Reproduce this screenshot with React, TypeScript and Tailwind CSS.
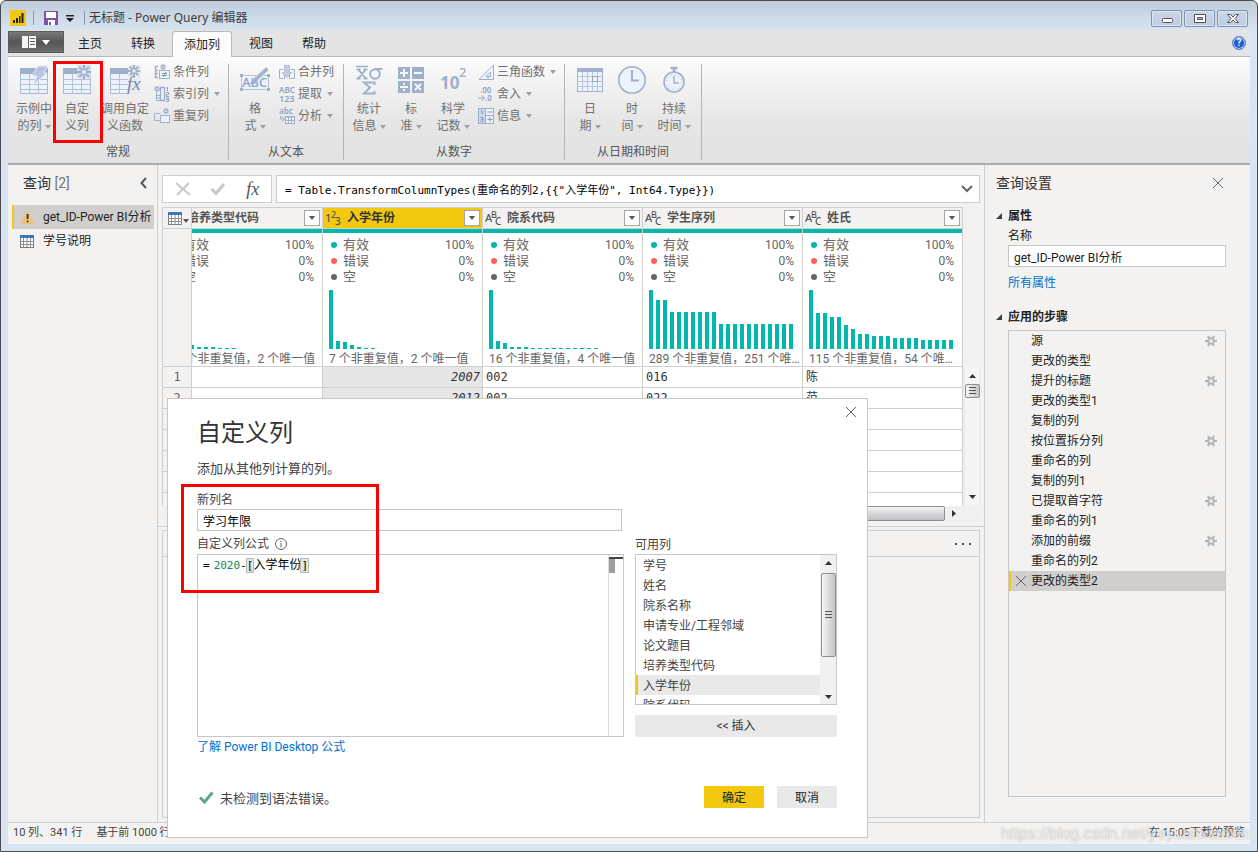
import type { ReactNode } from 'react';

type IconProps = { className?: string };

interface Column {
  name: string;
  type: 'number' | 'text';
  selected?: boolean;
  bars: number[];
  summary: string;
}

const TABS = ['主页', '转换', '添加列', '视图', '帮助'];

// 柱高以像素计，最高 59
const COLUMNS: Column[] = [
  { name: '培养类型代码', type: 'text', bars: [59, 30, 10, 4, 2, 2, 2, 1, 1, 1], summary: '10 个非重复值，2 个唯一值' },
  { name: '入学年份', type: 'number', selected: true, bars: [59, 8, 7, 4, 2, 1, 1], summary: '7 个非重复值，2 个唯一值' },
  {
    name: '院系代码',
    type: 'text',
    bars: [59, 8, 6, 2, 2, 2, 1, 1, 1, 1, 1, 1, 1, 1, 1, 1],
    summary: '16 个非重复值，4 个唯一值',
  },
  {
    name: '学生序列',
    type: 'text',
    bars: [59, 49, 49, 37, 37, 37, 37, 37, 37, 37, 25, 25, 25, 25, 25, 25, 25, 25, 25, 25, 25],
    summary: '289 个非重复值，251 个唯一值',
  },
  {
    name: '姓氏',
    type: 'text',
    bars: [59, 36, 36, 32, 32, 24, 20, 15, 15, 13, 13, 13, 11, 11, 11, 11, 9, 9, 9, 9, 9],
    summary: '115 个非重复值，54 个唯一值',
  },
];

const ROWS: string[][] = [
  ['', '2007', '002', '016', '陈'],
  ['', '2012', '002', '022', '范'],
  ['', '', '', '', ''],
  ['', '', '', '', ''],
  ['', '', '', '', ''],
  ['', '', '', '', ''],
  ['', '', '', '', ''],
];

const QUALITY = [
  { label: '有效', value: '100%', dot: 'bg-[#01b8aa]' },
  { label: '错误', value: '0%', dot: 'bg-[#fd625e]' },
  { label: '空', value: '0%', dot: 'bg-[#666666]' },
];

const STEPS: { name: string; gear?: boolean }[] = [
  { name: '源', gear: true },
  { name: '更改的类型' },
  { name: '提升的标题', gear: true },
  { name: '更改的类型1' },
  { name: '复制的列' },
  { name: '按位置拆分列', gear: true },
  { name: '重命名的列' },
  { name: '复制的列1' },
  { name: '已提取首字符', gear: true },
  { name: '重命名的列1' },
  { name: '添加的前缀', gear: true },
  { name: '重命名的列2' },
  { name: '更改的类型2' },
];

const AVAILABLE = ['学号', '姓名', '院系名称', '申请专业/工程邻域', '论文题目', '培养类型代码', '入学年份', '院系代码'];

/* ---------- 图标 ---------- */

function TableShape({ x = 0, y = 0 }: { x?: number; y?: number }) {
  return (
    <g transform={`translate(${x} ${y})`}>
      <rect x="0.5" y="0.5" width="27" height="25" fill="#edf3fc" stroke="#aab8cf" />
      <rect width="28" height="6" fill="#9fb0cc" />
      <path d="M9.5 6v20M18.5 6v20M0 11.5h28M0 16.5h28M0 21.5h28" stroke="#b4c2d9" fill="none" />
    </g>
  );
}

function Spark({ x, y, r = 6 }: { x: number; y: number; r?: number }) {
  const d = r * 0.7;
  return (
    <g transform={`translate(${x} ${y})`} stroke="#9fb0cc" strokeWidth={r > 5 ? 2 : 1.2}>
      <path d={`M0 ${-r}V${r}M${-r} 0H${r}M${-d} ${-d}L${d} ${d}M${-d} ${d}L${d} ${-d}`} />
      <circle r={r / 3.5} fill="#e8eef8" stroke="none" />
    </g>
  );
}

const ExampleIcon = () => (
  <svg width="30" height="30" viewBox="0 0 30 30">
    <TableShape x={1} y={3} />
    <path d="M19 1h10l-5 7h4L14 20l4-9h-5z" fill="#b6c5dd" stroke="#e8eef8" />
  </svg>
);

const CustomIcon = () => (
  <svg width="30" height="30" viewBox="0 0 30 30">
    <TableShape x={1} y={3} />
    <path d="M15 0h14v13H15z" fill="#d3dcea" />
    <Spark x={22} y={7} r={7} />
  </svg>
);

const InvokeIcon = () => (
  <svg width="32" height="30" viewBox="0 0 32 30" className="overflow-visible">
    <TableShape x={1} y={3} />
    <path d="M19 0h13v30H19z" fill="#eaebed" />
    <Spark x={25} y={6} />
    <text x="18" y="25" fontSize="19" fontStyle="italic" fontFamily="Liberation Serif, serif" fill="#7389ae">
      fx
    </text>
  </svg>
);

const ConditionIcon = () => (
  <svg width="16" height="16" viewBox="0 0 16 16" fill="none" stroke="#9fb0cc">
    <path d="M4 2.500H1.500V13.500H4M1.500 6.500H4M1.500 9.500H4" strokeWidth="1.500" />
    <rect x="5.500" y="6.500" width="10" height="8" fill="#edf3fc" />
    <path d="M8 9.500h5M8 11.500h5M12 8l-3 5" stroke="#7f93b5" />
    <Spark x={9} y={3} r={3} />
  </svg>
);

const IndexIcon = () => (
  <svg width="16" height="16" viewBox="0 0 16 16" fill="none" stroke="#9fb0cc">
    <path d="M2.500 6v8.500h4M2 9.500h4M2 12h4" />
    <rect x="6.500" y="1.500" width="4" height="13" fill="#edf3fc" strokeWidth="1.500" />
    <Spark x={3} y={3} r={3} />
    <path d="M13.500 1v4M12.500 2h1M12 6.500h2.500v2h-2v2H15M12 12h2.500v3.500H12M12.500 13.500H14" stroke="#8fa2c1" />
  </svg>
);

const DuplicateIcon = () => (
  <svg width="16" height="16" viewBox="0 0 16 16" fill="none" stroke="#9fb0cc">
    <path d="M6 5.500H0.500v7H6" />
    <rect x="6.500" y="7.500" width="9" height="7" fill="#edf3fc" />
    <Spark x={12} y={3} r={3} />
  </svg>
);

const FormatIcon = () => (
  <svg width="32" height="30" viewBox="0 0 32 30">
    <rect x="2.500" y="10.500" width="27" height="14" fill="#edf3fc" stroke="#b7c4da" />
    <text x="3" y="22" fontSize="13" fontFamily="Noto Sans, sans-serif" fontWeight="500" fill="#8fa2c1">
      ABC
    </text>
    <path d="M27 2l3 3-13 12-3-3z" fill="#a3b3cd" stroke="#e6e8ec" />
    <path d="M16 14c-3 0-3 4-6 5 4 1 8-1 8-3z" fill="#9fb0cc" />
    <path d="M1 9h3v3H1zM28 9h3v3h-3zM1 23h3v3H1zM28 23h3v3h-3z" fill="#9fb0cc" />
  </svg>
);

const MergeIcon = () => (
  <svg width="16" height="16" viewBox="0 0 16 16" fill="none" stroke="#9fb0cc">
    <path d="M4 5.500H0.500v9H4M12 5.500h3.500v9H12" />
    <path d="M5.500 1.500h5v7h2.500L8 13.500 3 8.500h2.500z" fill="#c0cce0" stroke="#b3c1d8" />
    <path d="M5.500 11v4M10.500 11v4" />
  </svg>
);

const ExtractIcon = () => (
  <svg width="17" height="16" viewBox="0 0 17 16" className="overflow-visible" fontFamily="Noto Sans, sans-serif" fontWeight="600" fill="#8fa2c1">
    <text x="0" y="7" fontSize="8">ABC</text>
    <text x="0" y="16" fontSize="9">123</text>
  </svg>
);

const ParseIcon = () => (
  <svg width="16" height="16" viewBox="0 0 16 16" className="overflow-visible" fill="none" stroke="#9fb0cc">
    <text x="0" y="6" fontSize="8" stroke="none" fontFamily="Noto Sans, sans-serif" fontWeight="600" fill="#8fa2c1">
      abc
    </text>
    <path d="M1.500 8v3H5M3 8.500L5.500 11 3 13.500" />
    <rect x="6.500" y="8.500" width="9" height="7" fill="#edf3fc" />
    <path d="M6 9h10M9.500 8v8M12.500 8v8M6 12.500h10" />
  </svg>
);

const StatsIcon = () => (
  <svg width="30" height="30" viewBox="0 0 30 30" fill="none" stroke="#9fb0cc" strokeWidth="2">
    <path d="M2 1.500h12" strokeWidth="1.500" />
    <path d="M4 4l8 10M12 4L4 14M2.500 4.500h4M9.500 4.500h4M2.500 13.500h4M9.500 13.500h4" />
    <path d="M28.500 4h-8" />
    <circle cx="21" cy="9" r="4.800" />
    <path d="M20.500 20v-2.500H10l6 5-6 6h10.500V26" />
  </svg>
);

const StandardIcon = () => (
  <svg width="28" height="28" viewBox="0 0 28 28" fill="none">
    <path d="M1 1h12v12H1zM15 1h12v12H15zM1 15h12v12H1zM15 15h12v12H15z" fill="#9fb0cc" />
    <path d="M7 3v8M3 7h8M17 7h8M3 21h8M18 18l6 6M24 18l-6 6" stroke="#f4f7fc" strokeWidth="2" />
    <path d="M6 17h2v2H6zM6 23h2v2H6z" fill="#f4f7fc" />
  </svg>
);

const ScienceIcon = () => (
  <svg width="30" height="30" viewBox="0 0 30 30" className="overflow-visible" fontFamily="Noto Sans, sans-serif" fontWeight="700" fill="#9fb0cc">
    <text x="2" y="24" fontSize="17">10</text>
    <text x="21" y="12" fontSize="13" fontWeight="500">2</text>
  </svg>
);

const TrigIcon = () => (
  <svg width="17" height="16" viewBox="0 0 17 16" fill="none" stroke="#9fb0cc">
    <path d="M1 15.500L15.500 1v14.500z" fill="#edf3fc" />
    <path d="M8 12.500L12.500 8v4.500zM10 12.500V16" />
  </svg>
);

const RoundIcon = () => (
  <svg width="16" height="16" viewBox="0 0 16 16" className="overflow-visible" fontFamily="Noto Sans, sans-serif" fontWeight="600" fill="#8fa2c1">
    <text x="2" y="7" fontSize="8">.00</text>
    <text x="7" y="15" fontSize="8">.0</text>
    <path d="M0 12h6M4 9.500L6.500 12 4 14.500" stroke="#8fa2c1" fill="none" />
  </svg>
);

const InfoGridIcon = () => (
  <svg width="16" height="16" viewBox="0 0 16 16" fill="none" stroke="#9fb0cc">
    <rect x="0.500" y="0.500" width="15" height="15" fill="#edf3fc" />
    <path d="M1 1h6v14H1z" fill="#cdd7e7" stroke="none" />
    <path d="M7.500 0v16M8 7.500h8" />
    <path d="M9.500 4h5M12 9v5M9.500 11.500h5M3 2.500h1V6M2.500 9.500H5v4H2.500M3 11.500h2" stroke="#8399bf" />
  </svg>
);

const DateIcon = () => (
  <svg width="28" height="28" viewBox="0 0 28 28" fill="none">
    <rect x="1.500" y="2.500" width="25" height="23" fill="#edf3fc" stroke="#9fb0cc" />
    <path d="M1 2h26v4H1z" fill="#9fb0cc" />
    <path d="M6.500 6v20M11.500 6v20M16.500 6v20M21.500 6v20M1 10.500h26M1 15.500h26M1 20.500h26" stroke="#b7c4da" />
    <path d="M16.500 10.500h5v5h-5z" stroke="#8fa2c1" />
  </svg>
);

const TimeIcon = () => (
  <svg width="30" height="30" viewBox="0 0 30 30" fill="none" stroke="#9fb0cc">
    <circle cx="15" cy="15" r="13.200" fill="#edf3fc" strokeWidth="1.600" />
    <path d="M15 5v10.500h7" strokeWidth="2" />
  </svg>
);

const DurationIcon = () => (
  <svg width="28" height="30" viewBox="0 0 28 30" fill="none" stroke="#9fb0cc">
    <circle cx="14" cy="17" r="10" fill="#edf3fc" strokeWidth="1.600" />
    <circle cx="14" cy="17" r="7.500" strokeDasharray="1 3" />
    <path d="M10.500 3h7M14 3v4" strokeWidth="2.500" />
    <path d="M14 11v7h5" strokeWidth="1.500" />
  </svg>
);

const GridIcon = () => (
  <svg width="14" height="13" viewBox="0 0 14 13" fill="none" className="shrink-0">
    <rect x="0.500" y="0.500" width="13" height="12" fill="#fff" stroke="#7a7a7a" />
    <path d="M0 0h14v3H0z" fill="#3e78b9" />
    <path d="M3.500 3v10M7 3v10M10.500 3v10M0 6.500h14M0 9.500h14" stroke="#8f8f8f" />
  </svg>
);

const GearIcon = () => (
  <svg width="12" height="12" viewBox="0 0 12 12" fill="none" stroke="#b5b5b5">
    <circle cx="6" cy="6" r="2.800" strokeWidth="2" />
    <path d="M0 6h3M9 6h3M3 1l1.500 3M9 1L7.500 4M3 11l1.500-3M9 11L7.500 8" strokeWidth="2" />
  </svg>
);

const CloseIcon = ({ className }: IconProps) => (
  <svg width="12" height="12" viewBox="0 0 12 12" className={className} fill="none" stroke="currentColor">
    <path d="M1 1l10 10M11 1L1 11" />
  </svg>
);

const Caret = ({ className = '' }: IconProps) => (
  <svg width="6" height="4" viewBox="0 0 6 4" className={`shrink-0 ${className}`}>
    <path d="M0 0h6L3 4z" fill="currentColor" />
  </svg>
);

const Expander = () => (
  <svg width="6" height="6" viewBox="0 0 6 6">
    <path d="M6 0v6H0z" fill="#3f3f3f" />
  </svg>
);

function TypeIcon({ type }: { type: Column['type'] }) {
  const [a, b, c] = type === 'number' ? ['1', '2', '3'] : ['A', 'B', 'C'];
  return (
    <svg width="18" height="18" viewBox="0 0 18 18" className="shrink-0 overflow-visible" fill="#555" fontFamily="Noto Sans, sans-serif" fontWeight="500">
      <text x="0" y="13" fontSize="11">{a}</text>
      <text x="6" y="9" fontSize="9">{b}</text>
      <text x="10" y="16" fontSize="10">{c}</text>
    </svg>
  );
}

/* ---------- 功能区 ---------- */

function BigButton({ icon, lines, menu, width }: { icon: ReactNode; lines: [string, string]; menu?: boolean; width: string }) {
  return (
    <button type="button" className={`flex shrink-0 flex-col items-center whitespace-nowrap leading-[17px] text-[#707070] ${width}`}>
      <span className="flex h-8 items-center">{icon}</span>
      <span className="mt-[5px]">{lines[0]}</span>
      <span className="flex items-center gap-[3px]">
        {lines[1]}
        {menu && <Caret className="text-[#a0a0a0]" />}
      </span>
    </button>
  );
}

function SmallButton({ icon, label, menu }: { icon: ReactNode; label: string; menu?: boolean }) {
  return (
    <button type="button" className="flex h-4 items-center whitespace-nowrap text-[#707070]">
      <span className="mr-0.5 flex w-[17px]">{icon}</span>
      {label}
      {menu && <Caret className="ml-[5px] text-[#a0a0a0]" />}
    </button>
  );
}

function RibbonGroup({ title, width, children }: { title: string; width: string; children: ReactNode }) {
  return (
    <div className={`flex shrink-0 flex-col justify-between border-r border-[#b4b4b4] ${width}`}>
      <div className="flex pl-1">{children}</div>
      <div className="text-center leading-4 text-[#555]">{title}</div>
    </div>
  );
}

function Ribbon() {
  return (
    <div className="relative flex h-[108px] shrink-0 border-b-2 border-[#ababab] bg-linear-to-b from-[#fbfbfb] via-[#e6e6e6] via-60% to-[#e2e2e2] pb-[3px] pt-[7px]">
      <RibbonGroup title="常规" width="w-[221px]">
        <BigButton icon={<ExampleIcon />} lines={['示例中', '的列']} menu width="w-[44px]" />
        <BigButton icon={<CustomIcon />} lines={['自定', '义列']} width="w-[42px]" />
        <BigButton icon={<InvokeIcon />} lines={['调用自定', '义函数']} width="w-[54px]" />
        <div className="flex flex-col gap-1.5 pl-0.5">
          <SmallButton icon={<ConditionIcon />} label="条件列" />
          <SmallButton icon={<IndexIcon />} label="索引列" menu />
          <SmallButton icon={<DuplicateIcon />} label="重复列" />
        </div>
      </RibbonGroup>
      <RibbonGroup title="从文本" width="w-[115px]">
        <BigButton icon={<FormatIcon />} lines={['格', '式']} menu width="w-[44px]" />
        <div className="flex flex-col gap-1.5 pl-0.5">
          <SmallButton icon={<MergeIcon />} label="合并列" />
          <SmallButton icon={<ExtractIcon />} label="提取" menu />
          <SmallButton icon={<ParseIcon />} label="分析" menu />
        </div>
      </RibbonGroup>
      <RibbonGroup title="从数字" width="w-[221px]">
        <BigButton icon={<StatsIcon />} lines={['统计', '信息']} menu width="w-[42px]" />
        <BigButton icon={<StandardIcon />} lines={['标', '准']} menu width="w-[42px]" />
        <BigButton icon={<ScienceIcon />} lines={['科学', '记数']} menu width="w-[42px]" />
        <div className="flex flex-col gap-1.5 pl-1">
          <SmallButton icon={<TrigIcon />} label="三角函数" menu />
          <SmallButton icon={<RoundIcon />} label="舍入" menu />
          <SmallButton icon={<InfoGridIcon />} label="信息" menu />
        </div>
      </RibbonGroup>
      <RibbonGroup title="从日期和时间" width="w-[137px]">
        <BigButton icon={<DateIcon />} lines={['日', '期']} menu width="w-[42px]" />
        <BigButton icon={<TimeIcon />} lines={['时', '间']} menu width="w-[42px]" />
        <BigButton icon={<DurationIcon />} lines={['持续', '时间']} menu width="w-[42px]" />
      </RibbonGroup>
      {/* 标注框 */}
      <div className="pointer-events-none absolute left-[45px] top-1 h-[82px] w-[50px] border-3 border-[#ff0000]" />
    </div>
  );
}

/* ---------- 标题栏与选项卡 ---------- */

function WindowButton({ label, children }: { label: string; children: ReactNode }) {
  return (
    <button
      type="button"
      aria-label={label}
      className="flex h-[17px] w-[31px] items-center justify-center rounded-[2px] border border-[#7f8fae] bg-linear-to-b from-[#c9d7e8] to-[#bccbdd] shadow-[inset_0_0_0_1px_#dbe6f2]"
    >
      <svg width="12" height="11" viewBox="0 0 12 11" fill="#fff" stroke="#50505f">
        {children}
      </svg>
    </button>
  );
}

function TitleBar() {
  return (
    <header className="flex h-[29px] shrink-0 items-center px-0.5 pt-[5px] text-[#3c3c3c]">
      <svg width="16" height="16" viewBox="0 0 16 16">
        <path d="M0 0h16v16H0z" fill="#f2c811" />
        <path d="M3 10h2v3H3zM6 8h2v5H6zM9 6h1.500v7H9zM11.500 3h2v10h-2z" fill="#222" />
      </svg>
      <span className="ml-[7px] h-3.5 w-px bg-[#8b98a6]" />
      <svg width="14" height="14" viewBox="0 0 14 14" className="ml-2.5">
        <path d="M0 0h14v14H0z" fill="#8151a5" />
        <path d="M2 1h10v6H2zM4 9h7v5H4z" fill="#fff" />
        <path d="M5 11h2v3H5z" fill="#8151a5" />
      </svg>
      <svg width="8" height="7" viewBox="0 0 8 7" className="ml-2">
        <path d="M0 0h8v1.500H0zM0 3h8L4 7z" fill="#222" />
      </svg>
      <span className="ml-2.5 h-3.5 w-px bg-[#8b98a6]" />
      <h1 className="ml-1 flex-1 whitespace-nowrap font-['Noto_Sans','Noto_Sans_CJK_SC',sans-serif]">无标题 - Power Query 编辑器</h1>
      <div className="flex gap-0.5">
        <WindowButton label="最小化">
          <rect x="1.500" y="5.500" width="10" height="4" rx="1" />
        </WindowButton>
        <WindowButton label="最大化">
          <path d="M0.500 1.500h11v8H0.500zM3.500 4.500v2h5v-2z" fillRule="evenodd" />
        </WindowButton>
        <WindowButton label="关闭">
          <path d="M0.500 1.500h3L6 4l2.500-2.500h3l-3.500 4 3.500 4h-3L6 7 3.500 9.500h-3l3.500-4z" />
        </WindowButton>
      </div>
    </header>
  );
}

function TabStrip() {
  return (
    <nav className="flex h-[27px] shrink-0 items-start border-b border-[#b9b9b9] bg-[#e4e4e4] pt-px text-[#222]">
      <button
        type="button"
        aria-label="文件"
        className="flex h-[22px] w-14 items-center justify-center gap-1.5 border border-[#5b5b5b] bg-linear-to-b from-[#7a7a7a] via-[#555] to-[#6d6d6d] text-white"
      >
        <svg width="14" height="12" viewBox="0 0 14 12">
          <path d="M0 0h14v12H0z" fill="#f4f4f4" />
          <path d="M6.500 0v12M8 2.500h5M8 5.500h5M8 8.500h5" stroke="#666" />
        </svg>
        <svg width="8" height="5" viewBox="0 0 8 5">
          <path d="M0 0h8L4 5z" fill="#fff" />
        </svg>
      </button>
      <div className="flex gap-px">
        {TABS.map((tab) => (
          <button
            key={tab}
            type="button"
            className={
              tab === '添加列'
                ? 'mx-0.5 h-[26px] rounded-t-[3px] border border-b-0 border-[#b9b9b9] bg-[#fcfcfc] px-[11px]'
                : 'h-[26px] px-3.5'
            }
          >
            {tab}
          </button>
        ))}
      </div>
      <button
        type="button"
        aria-label="帮助文档"
        className="ml-auto mr-1 mt-[5px] flex size-[14px] items-center justify-center rounded-full border border-[#5f86d0] bg-[#2259cf] text-[10px] font-bold text-white shadow-[inset_0_0_0_1px_#b7d0f7]"
      >
        ?
      </button>
    </nav>
  );
}

/* ---------- 主体 ---------- */

function QueryPane() {
  return (
    <aside className="w-[150px] shrink-0 border-r border-[#cfcfcf] pt-2">
      <div className="mb-3 flex h-5 items-center justify-between pl-[15px] pr-2.5">
        <h2 className="text-sm text-[#333]">
          查询 <span className="text-[#777]">[2]</span>
        </h2>
        <button type="button" aria-label="折叠">
          <svg width="7" height="12" viewBox="0 0 7 12" fill="none" stroke="#555" strokeWidth="2">
            <path d="M6 1L1.500 6 6 11" />
          </svg>
        </button>
      </div>
      <ul className="ml-1 mr-[3px] whitespace-nowrap text-[#222]">
        <li className="flex h-6 items-center gap-2 border-l-2 border-[#f2c811] bg-[#d0cfce] pl-1.5">
          <svg width="15" height="14" viewBox="0 0 15 14" className="shrink-0">
            <path d="M7.500 0L15 14H0z" fill="#ecc27f" />
            <path d="M6.700 4h1.800v5H6.700zM6.700 10.500h1.800v1.800H6.700z" fill="#333" />
          </svg>
          get_ID-Power BI分析
        </li>
        <li className="flex h-6 items-center gap-[9px] pl-2">
          <GridIcon />
          学号说明
        </li>
      </ul>
    </aside>
  );
}

function FormulaBar() {
  return (
    <div className="flex h-7 shrink-0 gap-1">
      <div className="flex w-[110px] items-center justify-around border border-[#cfcfcf] bg-white px-0.5 text-[#c8c8c8]">
        <button type="button" aria-label="放弃">
          <svg width="16" height="14" viewBox="0 0 16 14" fill="none" stroke="currentColor" strokeWidth="2">
            <path d="M1 1l14 12M14 1L2 13" />
          </svg>
        </button>
        <button type="button" aria-label="提交">
          <svg width="16" height="14" viewBox="0 0 16 14" fill="none" stroke="currentColor" strokeWidth="3">
            <path d="M1.500 7l4.500 4.500L14 2" />
          </svg>
        </button>
        <button type="button" className="font-['Liberation_Serif',serif] text-lg leading-5 italic text-[#555]">
          fx
        </button>
      </div>
      <div className="flex flex-1 items-center border border-[#cfcfcf] bg-white pr-1.5">
        <input
          aria-label="公式"
          className="h-full min-w-0 flex-1 bg-transparent pl-2 font-['DejaVu_Sans_Mono','Noto_Sans_CJK_SC',monospace] text-[11px] text-black outline-none"
          defaultValue={'= Table.TransformColumnTypes(重命名的列2,{{"入学年份", Int64.Type}})'}
        />
        <svg width="12" height="8" viewBox="0 0 12 8" fill="none" stroke="#666" strokeWidth="2">
          <path d="M1 1l5 5 5-5" />
        </svg>
      </div>
    </div>
  );
}

function ColumnProfile({ column }: { column: Column }) {
  return (
    <div className="h-[137px] w-[159px] shrink-0 border-t-4 border-[#01b8aa] bg-white pt-1 font-normal text-[#666]">
      <ul>
        {QUALITY.map((q) => (
          <li key={q.label} className="flex h-4 items-center px-2">
            <span className={`size-1.5 rounded-full ${q.dot}`} />
            <span className="ml-1.5 flex-1 text-left text-[13px]">{q.label}</span>
            <span>{q.value}</span>
          </li>
        ))}
      </ul>
      <div className="mt-1 flex h-[60px] items-end gap-[3px] pl-1.5">
        {column.bars.map((h, i) => (
          <span key={i} className="w-1 bg-[#01b8aa]" style={{ height: h }} />
        ))}
      </div>
      <div className="truncate pl-1.5 text-left leading-5">{column.summary}</div>
    </div>
  );
}

function DataGrid() {
  return (
    <div className="min-w-0 flex-1 overflow-hidden">
      <table className="w-[801px] table-fixed border-separate border-spacing-0 border-l border-t border-[#cfcfcf]">
        <colgroup>
          <col className="w-[29px]" />
          <col className="w-[131px]" />
          <col className="w-[160px]" />
          <col className="w-[160px]" />
          <col className="w-[160px]" />
          <col className="w-[160px]" />
        </colgroup>
        <thead>
          <tr className="h-[21px]">
            <th className="border-b border-r border-[#cfcfcf] bg-[#f3f2f1] p-0">
              <div className="flex items-center gap-px pl-[5px] text-[#555]">
                <GridIcon />
                <Caret className="mt-1.5" />
              </div>
            </th>
            {COLUMNS.map((c) => (
              <th
                key={c.name}
                className={`overflow-hidden border-b border-r border-[#cfcfcf] p-0 ${c.selected ? 'bg-[#f2c811] text-[#333]' : 'bg-[#f3f2f1] text-[#555]'}`}
              >
                <div className="flex h-5 justify-end">
                  <div className="flex w-[159px] shrink-0 items-center px-0.5">
                    <TypeIcon type={c.type} />
                    <span className="ml-1 flex-1 text-left">{c.name}</span>
                    <button
                      type="button"
                      aria-label={`筛选 ${c.name}`}
                      className="flex size-4 items-center justify-center border border-[#a6a6a6] bg-white text-[#555]"
                    >
                      <Caret />
                    </button>
                  </div>
                </div>
              </th>
            ))}
          </tr>
          <tr>
            <th className="border-b border-r border-[#cfcfcf] bg-[#f3f2f1] p-0" />
            {COLUMNS.map((c) => (
              <th key={c.name} className="overflow-hidden border-b border-r border-[#cfcfcf] p-0">
                <div className="flex justify-end">
                  <ColumnProfile column={c} />
                </div>
              </th>
            ))}
          </tr>
        </thead>
        <tbody className="font-['DejaVu_Sans_Mono','Noto_Sans_CJK_SC',monospace] text-[#333]">
          {ROWS.map((row, r) => (
            <tr key={r} className="h-[21px] leading-5">
              <th scope="row" className="border-b border-r border-[#cfcfcf] bg-[#f3f2f1] p-0 font-normal text-[#666]">
                {r + 1}
              </th>
              {row.map((cell, i) => (
                <td
                  key={i}
                  className={`border-b border-r border-[#cfcfcf] py-0 ${COLUMNS[i].selected ? 'bg-[#e6e6e6] px-0.5 text-right italic' : 'bg-white px-[3px]'}`}
                >
                  {cell}
                </td>
              ))}
            </tr>
          ))}
        </tbody>
      </table>
    </div>
  );
}

function ScrollArrow({ dir }: { dir: 'up' | 'down' | 'left' | 'right' }) {
  const d = { up: 'M1 6l3.500-4L8 6z', down: 'M1 3l3.500 4L8 3z', left: 'M6 1L2 4.500 6 8z', right: 'M3 1l4 3.500L3 8z' }[dir];
  return (
    <span className="flex size-4 shrink-0 items-center justify-center">
      <svg width="9" height="9" viewBox="0 0 9 9">
        <path d={d} fill="#333" />
      </svg>
    </span>
  );
}

function ScrollThumb({ size }: { size: string }) {
  return (
    <div className={`flex w-[15px] items-center justify-center rounded-[2px] border border-[#8e8e8e] bg-linear-to-r from-[#f6f6f6] to-[#c4c4c8] ${size}`}>
      <svg width="7" height="8" viewBox="0 0 7 8">
        <path d="M0 .5h7M0 3.500h7M0 6.500h7" stroke="#555" />
      </svg>
    </div>
  );
}

function CenterPane() {
  return (
    <main className="flex min-w-0 flex-1 flex-col border-r border-[#cfcfcf]">
      <div className="flex h-[362px] shrink-0 flex-col border-b border-[#cfcfcf] px-1 pb-[5px] pt-2.5">
        <FormulaBar />
        <div className="mt-1 flex min-h-0 flex-1">
          <DataGrid />
          <div className="mt-[161px] flex w-4 flex-col items-center border-x border-[#e8e8e8] bg-[#f5f5f5] pb-0.5">
            <ScrollArrow dir="up" />
            <ScrollThumb size="h-[14px]" />
            <div className="flex-1" />
            <ScrollArrow dir="down" />
          </div>
        </div>
        <div className="flex h-[15px] shrink-0 items-center bg-[#f0f0f0] pr-[19px]">
          <ScrollArrow dir="left" />
          <div className="h-[15px] flex-1 rounded-[2px] border border-[#8e8e8e] bg-linear-to-b from-[#f6f6f6] via-[#d8d8da] to-[#c2c2c6]" />
          <ScrollArrow dir="right" />
        </div>
      </div>
      <div className="mx-1 mb-1 mt-[3px] flex-1 border border-[#cfcfcf]">
        <div className="flex h-[26px] items-center justify-end border-b border-[#cfcfcf] pr-2">
          <button type="button" aria-label="更多">
            <svg width="16" height="2" viewBox="0 0 16 2">
              <path d="M0 0h2v2H0zM7 0h2v2H7zM14 0h2v2h-2z" fill="#4a4a55" />
            </svg>
          </button>
        </div>
      </div>
    </main>
  );
}

function SettingsPane() {
  return (
    <aside className="flex w-[265px] shrink-0 flex-col pb-[25px] pl-[11px] pr-6 pt-2 text-[#222]">
      <div className="flex h-5 items-center justify-between pr-0.5">
        <h2 className="text-sm text-[#333]">查询设置</h2>
        <button type="button" aria-label="关闭查询设置" className="text-[#666]">
          <CloseIcon />
        </button>
      </div>
      <h3 className="mt-[13px] flex h-5 items-center gap-1.5 font-bold">
        <Expander />
        属性
      </h3>
      <div className="flex flex-col pl-3">
        <label htmlFor="query-name" className="h-[19px] leading-5">
          名称
        </label>
        <input id="query-name" className="h-[22px] border border-[#c6c6c6] bg-white px-[5px] outline-none" defaultValue="get_ID-Power BI分析" />
        <a href="#properties" className="mt-1.5 leading-5 text-[#0072d0]">
          所有属性
        </a>
      </div>
      <h3 className="mt-3.5 flex h-5 items-center gap-1.5 font-bold">
        <Expander />
        应用的步骤
      </h3>
      <ul className="ml-3 mt-[3px] flex-1 border border-[#c6c6c6]">
        {STEPS.map((step, i) => {
          const active = i === STEPS.length - 1;
          return (
            <li
              key={step.name}
              className={`flex h-5 items-center border-l-2 pr-2 ${active ? 'border-[#f2c811] bg-[#d0cfce]' : 'border-transparent'}`}
            >
              <span className="flex w-5 pl-1 text-[#666]">{active && <CloseIcon />}</span>
              <span className="flex-1 leading-[22px]">{step.name}</span>
              {step.gear && <GearIcon />}
            </li>
          );
        })}
      </ul>
    </aside>
  );
}

function CustomColumnDialog() {
  return (
    <section
      role="dialog"
      aria-labelledby="dialog-title"
      className="absolute left-[166px] top-[397px] h-[440px] w-[701px] border border-[#c6c6c6] bg-white pl-[29px] pr-[30px] pt-5 text-[#444]"
    >
      <button type="button" aria-label="关闭对话框" className="absolute right-2.5 top-[7px] text-[#666]">
        <CloseIcon />
      </button>
      <h2 id="dialog-title" className="text-2xl leading-7 text-[#333]">
        自定义列
      </h2>
      <p className="mt-3 text-[13px] leading-5">添加从其他列计算的列。</p>
      <label htmlFor="column-name" className="mt-2.5 block h-5 leading-[22px]">
        新列名
      </label>
      <input id="column-name" className="block h-[22px] w-[425px] border border-[#c6c6c6] px-[5px] text-black outline-none" defaultValue="学习年限" />

      <div className="mt-[3px] flex gap-[11px]">
        <div className="w-[427px]">
          <div id="formula-label" className="flex h-5 items-center gap-1.5 leading-[22px]">
            自定义列公式
            <svg width="12" height="12" viewBox="0 0 12 12" fill="none" stroke="#666">
              <circle cx="6" cy="6" r="5.500" />
              <path d="M6 5v4.500M6 2.500V4" />
            </svg>
          </div>
          <div className="flex h-[183px] border border-[#c6c6c6]">
            <div
              role="textbox"
              aria-labelledby="formula-label"
              contentEditable
              suppressContentEditableWarning
              className="flex-1 whitespace-pre border-r border-[#dcdcdc] px-[5px] font-['DejaVu_Sans_Mono','Noto_Sans_CJK_SC',monospace] text-[11px] leading-5 text-black outline-none"
            >
              <span className="mr-1">=</span>
              <span className="text-[#09885a]">2020</span>-
              <span className="bg-[#dce8e4] outline outline-[#b9b9b9]">[</span>
              <span className="text-xs leading-5">入学年份</span>
              <span className="bg-[#dce8e4] outline outline-[#b9b9b9]">]</span>
            </div>
            <div className="w-3.5 pt-0.5">
              <div className="h-0.5 bg-[#444]" />
              <div className="h-3.5 w-1.5 bg-[#9e9e9e]" />
            </div>
          </div>
          <a href="#formulas" className="block leading-5 text-[#0072d0]">
            了解 Power BI Desktop 公式
          </a>
        </div>

        <div className="flex w-[202px] flex-col">
          <div id="available-label" className="h-5 leading-[22px]">
            可用列
          </div>
          <div className="flex h-[151px] border border-[#c6c6c6]">
            <ul role="listbox" aria-labelledby="available-label" className="flex-1 overflow-hidden">
              {AVAILABLE.map((name) => (
                <li
                  key={name}
                  role="option"
                  aria-selected={name === '入学年份'}
                  className={`h-5 border-l-2 pl-[5px] leading-[22px] ${name === '入学年份' ? 'border-[#f2c811] bg-[#e9e9e9]' : 'border-transparent'}`}
                >
                  {name}
                </li>
              ))}
            </ul>
            <div className="flex w-4 flex-col items-center bg-[#f1f1f1]">
              <ScrollArrow dir="up" />
              <ScrollThumb size="mt-0.5 h-[84px]" />
              <div className="flex-1" />
              <ScrollArrow dir="down" />
            </div>
          </div>
          <button type="button" className="mt-2.5 h-[22px] bg-[#e9e9e9] text-[#333]">
            &lt;&lt; 插入
          </button>
        </div>
      </div>

      <div className="mt-[29px] flex h-[22px] items-center">
        <svg width="15" height="13" viewBox="0 0 15 13" className="ml-0.5" fill="none" stroke="#62a38a" strokeWidth="3">
          <path d="M1 6.500l4.500 4.500L13.500 1.500" />
        </svg>
        <span className="ml-1.5 flex-1 pt-1 text-[13px]">未检测到语法错误。</span>
        <button type="button" className="h-[22px] w-[60px] bg-[#f2c811] pt-0.5 text-[#222]">
          确定
        </button>
        <button type="button" className="ml-[13px] h-[22px] w-[60px] bg-[#e9e9e9] pt-0.5 text-[#222]">
          取消
        </button>
      </div>

      {/* 标注框 */}
      <div className="pointer-events-none absolute left-[13px] top-[85px] h-[109px] w-[198px] border-3 border-[#ff0000]" />
    </section>
  );
}

export default function App() {
  return (
    <div className="relative flex h-screen flex-col overflow-hidden rounded-t-md border border-[#4b4b4f] bg-linear-to-b from-[#bfccda] to-[#d7e4f2] to-[30px] px-[7px] pb-[7px] font-[Roboto,'Noto_Sans_CJK_SC',sans-serif] text-xs">
      <TitleBar />
      <TabStrip />
      <Ribbon />
      <div className="flex min-h-0 flex-1 bg-[#f3f2f1]">
        <QueryPane />
        <CenterPane />
        <SettingsPane />
      </div>
      <footer className="relative flex h-[22px] shrink-0 items-center border-t border-[#cfcfcf] bg-[#f3f2f1] px-[5px] text-[11px] text-[#444]">
        <span>10 列、341 行</span>
        <span className="ml-3.5">基于前 1000 行</span>
        <span className="ml-auto">在 15:05下载的预览</span>
        <span className="absolute bottom-0 right-0 font-['Liberation_Sans',sans-serif] text-base leading-5 text-white/60 [text-shadow:0_0_2px_#aaa]">
          https://blog.csdn.net/yeyuanxiaoxin
        </span>
      </footer>
      <CustomColumnDialog />
    </div>
  );
}
